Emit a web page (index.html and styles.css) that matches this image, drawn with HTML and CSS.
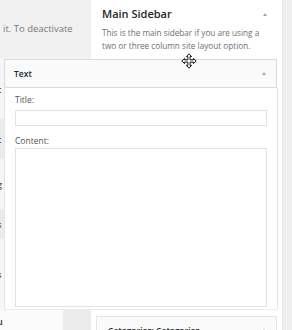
FILE: index.html
```html
<!DOCTYPE html>
<html lang="en">
<head>
    <meta charset="UTF-8">
    <title>Widgets</title>
    <link rel="stylesheet" href="styles.css">
</head>
<body>
    <div class="screen">
        <div class="available">
            <p class="note">it. To deactivate</p>
            <ul class="widget-list">
                <li class="band-light row-a"><span class="cut">c</span></li>
                <li class="band-dark row-b"><span class="cut">c</span></li>
                <li class="band-light row-c"><span class="cut">g</span></li>
                <li class="band-dark row-d"><span class="cut">s</span></li>
                <li class="band-light row-e"><span class="cut">s</span></li>
            </ul>
            <div class="available-foot">
                <div class="foot-white"><span class="cut">u</span></div>
                <div class="foot-grey"></div>
            </div>
        </div>

        <div class="sidebar">
            <div class="sidebar-head">
                <h3>Main Sidebar</h3>
                <span class="toggle"></span>
            </div>
            <p class="sidebar-desc">This is the main sidebar if you are using a two or three column site layout option.</p>
            <div class="sidebar-drop"></div>
            <div class="widget-cat">
                <span class="widget-title">Categories: Categories</span>
                <span class="toggle"></span>
            </div>
        </div>

        <div class="right-strip"></div>

        <!-- widget being dragged -->
        <div class="dragging">
            <div class="widget-top">
                <span class="widget-title">Text</span>
                <span class="toggle"></span>
            </div>
            <div class="widget-inside">
                <label class="field-label">Title:</label>
                <input type="text" class="field-input">
                <label class="field-label">Content:</label>
                <textarea class="field-area"></textarea>
            </div>
        </div>

        <svg class="move-cursor" width="16" height="16" viewBox="0 0 16 16">
            <path d="M8 0.8 L10.6 3.6 L9.1 3.6 L9.1 6.9 L12.4 6.9 L12.4 5.4 L15.2 8 L12.4 10.6 L12.4 9.1 L9.1 9.1 L9.1 12.4 L10.6 12.4 L8 15.2 L5.4 12.4 L6.9 12.4 L6.9 9.1 L3.6 9.1 L3.6 10.6 L0.8 8 L3.6 5.4 L3.6 6.9 L6.9 6.9 L6.9 3.6 L5.4 3.6 Z" fill="#fff" stroke="#111" stroke-width="1" stroke-linejoin="round"/>
        </svg>
    </div>
</body>
</html>
```

FILE: styles.css
```css
body {
    margin: 0;
    font-family: "Open Sans", "Liberation Sans", sans-serif;
    background-color: #f1f1f1;
    color: #444;
}
.screen {
    position: relative;
    display: grid;
    grid-template-columns: 91px 192px 9px;
    width: 292px;
    height: 330px;
    overflow: hidden;
}

/* left column: available widgets */
.available {
    display: flex;
    flex-direction: column;
    background-color: #f1f1f1;
}
.note {
    margin: 0;
    padding: 23px 0 0 3px;
    height: 36px;
    font-size: 9.5px;
    line-height: 12px;
    color: #777;
    white-space: nowrap;
}
.widget-list {
    list-style: none;
    margin: 0;
    padding: 0;
    flex: 1;
    display: flex;
    flex-direction: column;
}
.widget-list li {
    display: flex;
    align-items: center;
    font-size: 9px;
    font-weight: 600;
    color: #555;
}
.row-a { height: 60px; }
.row-b { height: 40px; }
.row-c { height: 50px; }
.row-d { height: 30px; }
.row-e { flex: 1; }
.band-light {
    background-color: #f6f6f6;
}
.band-dark {
    background-color: #ebebeb;
}
.cut {
    margin-left: -3px;
}
.available-foot {
    display: flex;
    height: 20px;
}
.foot-white {
    width: 63px;
    background-color: #fbfbfb;
    font-size: 9px;
    font-weight: 600;
    color: #333;
    padding-top: 5px;
}
.foot-grey {
    flex: 1;
    background-color: #ececec;
}

/* right column: the sidebar */
.sidebar {
    display: flex;
    flex-direction: column;
    background-color: #fff;
    border-right: 1px solid #e8e8e8;
}
.sidebar-head {
    display: flex;
    align-items: center;
    justify-content: space-between;
    padding: 7px 15px 0 11px;
}
.sidebar-head h3 {
    margin: 0;
    font-size: 11px;
    line-height: 14px;
    font-weight: 600;
    color: #23282d;
}
.sidebar-desc {
    margin: 5px 0 0;
    padding: 0 16px 0 11px;
    font-size: 8.2px;
    line-height: 13px;
    color: #6f6f6f;
}
.sidebar-drop {
    flex: 1;
}
.widget-cat {
    display: flex;
    align-items: flex-start;
    justify-content: space-between;
    margin: 0 5px;
    height: 5px;
    padding: 8px 10px 0 11px;
    border: 1px solid #e5e5e5;
    border-bottom: none;
    background-color: #fafafa;
}
.widget-title {
    font-size: 8.5px;
    line-height: 12px;
    font-weight: 600;
    color: #23282d;
}
.toggle {
    width: 0;
    height: 0;
    border-left: 2.5px solid transparent;
    border-right: 2.5px solid transparent;
    border-bottom: 3px solid #a0a5aa;
}
.widget-cat .toggle {
    margin-top: 4px;
}
.right-strip {
    background-color: #efefef;
}

/* the Text widget while it is dragged */
.dragging {
    position: absolute;
    left: 4px;
    top: 59px;
    width: 274px;
    height: 251px;
    display: flex;
    flex-direction: column;
}
.widget-top {
    display: flex;
    align-items: center;
    justify-content: space-between;
    height: 29px;
    margin-right: 1px;
    padding: 0 10px 0 9px;
    box-sizing: border-box;
    border: 1px solid #dcdcdc;
    background-color: #fafafa;
}
.widget-inside {
    flex: 1;
    display: flex;
    flex-direction: column;
    padding: 6px 10px 2px 10px;
    background-color: #fff;
    border-left: 1px solid #e5e5e5;
    border-right: 1px solid #e5e5e5;
    border-bottom: 1px solid #ececec;
}
.field-label {
    font-size: 8.5px;
    line-height: 12px;
    color: #555;
}
.field-input {
    margin: 4px 0 9px;
    height: 16px;
    padding: 0;
    box-sizing: border-box;
    border: 1px solid #e2e2e2;
    background-color: #fff;
}
.field-area {
    flex: 1;
    margin: 1px 0 0;
    padding: 0;
    resize: none;
    border: 1px solid #e2e2e2;
    background-color: #fff;
}
.move-cursor {
    position: absolute;
    left: 181px;
    top: 53px;
}
```
